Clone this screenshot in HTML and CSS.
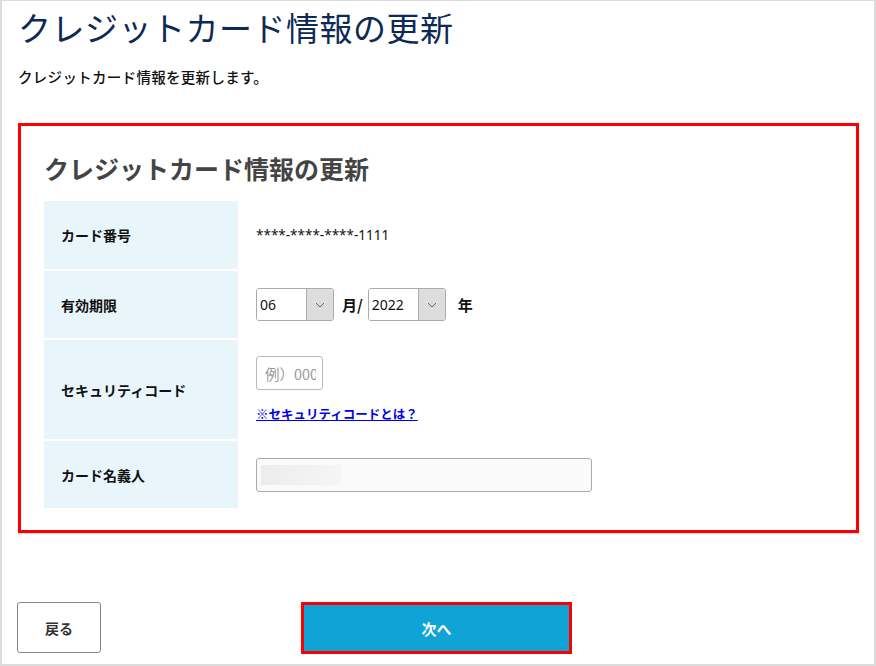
FILE: index.html
```html
<!DOCTYPE html>
<html lang="ja">
<head>
<meta charset="utf-8">
<title>クレジットカード情報の更新</title>
<link rel="stylesheet" href="styles.css">
</head>
<body>
<div class="page">
  <h1 class="page-title">クレジットカード情報の更新</h1>
  <p class="lead">クレジットカード情報を更新します。</p>

  <section class="card-box">
    <h2 class="box-title">クレジットカード情報の更新</h2>
    <div class="form-table">
      <div class="label">カード番号</div>
      <div class="value"><span class="card-num">****-****-****-1111</span></div>

      <div class="label">有効期限</div>
      <div class="value">
        <div class="expiry">
          <div class="select">
            <select><option>06</option></select>
            <span class="arrow"><svg width="10" height="6" viewBox="0 0 10 6"><path d="M1 1l4 4 4-4" fill="none" stroke="#666" stroke-width="1"/></svg></span>
          </div>
          <span class="unit">月/</span>
          <div class="select">
            <select><option>2022</option></select>
            <span class="arrow"><svg width="10" height="6" viewBox="0 0 10 6"><path d="M1 1l4 4 4-4" fill="none" stroke="#666" stroke-width="1"/></svg></span>
          </div>
          <span class="unit unit-year">年</span>
        </div>
      </div>

      <div class="label">セキュリティコード</div>
      <div class="value">
        <div class="sec-col">
          <input class="sec-input" type="text" placeholder="例）0000">
          <a class="sec-link" href="#">※セキュリティコードとは？</a>
        </div>
      </div>

      <div class="label">カード名義人</div>
      <div class="value"><input class="name-input" type="text"></div>
    </div>
  </section>

  <div class="actions">
    <button class="btn-back" type="button">戻る</button>
    <button class="btn-next" type="button">次へ</button>
  </div>
</div>
</body>
</html>
```

FILE: styles.css
```css
html, body {
  margin: 0;
  padding: 0;
  background: #fff;
}
body {
  font-family: "Noto Sans CJK JP", "Noto Sans", sans-serif;
  color: #111;
}
.page {
  box-sizing: border-box;
  width: 876px;
  height: 666px;
  border: 2px solid #dcdcdc;
  border-top-width: 1px;
  padding: 4px 0 0 16px;
  overflow: hidden;
}
.page-title {
  margin: 0;
  font-size: 33px;
  line-height: 44px;
  font-weight: 400;
  color: #0c2a55;
  letter-spacing: 0.5px;
}
.lead {
  margin: 18px 0 0 0;
  font-size: 14.5px;
  line-height: 20px;
  font-weight: 500;
  color: #111;
  letter-spacing: 0.3px;
}
.card-box {
  box-sizing: border-box;
  width: 841px;
  margin: 36px 0 0 0;
  border: 3px solid #ff0000;
  padding: 25px 0 22px 23px;
  box-shadow: 0 1px 1px rgba(0,0,0,0.15);
}
.box-title {
  margin: 0 0 16px 0;
  font-size: 25px;
  line-height: 34px;
  font-weight: 700;
  color: #444;
}
.form-table {
  display: grid;
  grid-template-columns: 194px 1fr;
  grid-template-rows: 68px 67px 99px 67px;
  row-gap: 2px;
}
.label {
  background: #e8f6fc;
  display: flex;
  align-items: center;
  padding-left: 17px;
  font-size: 14px;
  font-weight: 700;
  color: #111;
}
.value {
  display: flex;
  align-items: center;
  padding-left: 18px;
  font-size: 14px;
}
.card-num {
  font-family: "Noto Sans", "Noto Sans CJK JP", sans-serif;
  font-size: 13.5px;
  color: #111;
}
.expiry {
  display: flex;
  align-items: center;
}
.select {
  display: flex;
  width: 78px;
  height: 33px;
  box-sizing: border-box;
  border: 1px solid #aaa;
  border-radius: 3px;
  overflow: hidden;
  background: #fff;
}
.select select {
  appearance: none;
  -webkit-appearance: none;
  border: none;
  outline: none;
  background: #fff;
  flex: 1;
  min-width: 0;
  padding: 0 0 0 3px;
  font-family: "Noto Sans", "Noto Sans CJK JP", sans-serif;
  font-size: 14px;
  color: #111;
}
.arrow {
  width: 26px;
  background: #dddddd;
  border-left: 1px solid #aaa;
  display: flex;
  align-items: center;
  justify-content: center;
}
.unit {
  font-size: 15px;
  font-weight: 700;
  margin: 0 5px 0 8px;
}
.unit-year {
  margin-left: 12px;
}
.sec-col {
  display: flex;
  flex-direction: column;
  align-items: flex-start;
}
.sec-input {
  box-sizing: border-box;
  width: 67px;
  height: 34px;
  border: 1px solid #bbb;
  border-radius: 3px;
  padding: 0 6px 0 8px;
  font-family: "Noto Sans CJK JP", sans-serif;
  font-size: 14.5px;
  background: #fff;
}
.sec-input::placeholder {
  color: #999;
}
.sec-link {
  margin-top: 15px;
  font-size: 12.5px;
  line-height: 18px;
  font-weight: 700;
  color: #0000ee;
  text-decoration: underline;
}
.name-input {
  box-sizing: border-box;
  width: 336px;
  height: 34px;
  border: 1px solid #aaa;
  border-radius: 3px;
  background: linear-gradient(90deg, #ececec, #f1f1f1 50%, #f5f5f5) no-repeat 4px 6px / 80px 20px, #fafafa;
}
.actions {
  display: flex;
  align-items: flex-start;
  margin-top: 69px;
}
.btn-back {
  box-sizing: border-box;
  width: 84px;
  height: 51px;
  margin-left: -1px;
  background: #fff;
  border: 1px solid #888;
  border-radius: 3px;
  font-family: "Noto Sans CJK JP", sans-serif;
  font-size: 14px;
  font-weight: 700;
  color: #333;
}
.btn-next {
  box-sizing: border-box;
  width: 271px;
  height: 52px;
  margin-left: 200px;
  background: #0fa3d6;
  border: 3px solid #ff0000;
  font-family: "Noto Sans CJK JP", sans-serif;
  font-size: 15px;
  font-weight: 700;
  color: #fff;
}
```
